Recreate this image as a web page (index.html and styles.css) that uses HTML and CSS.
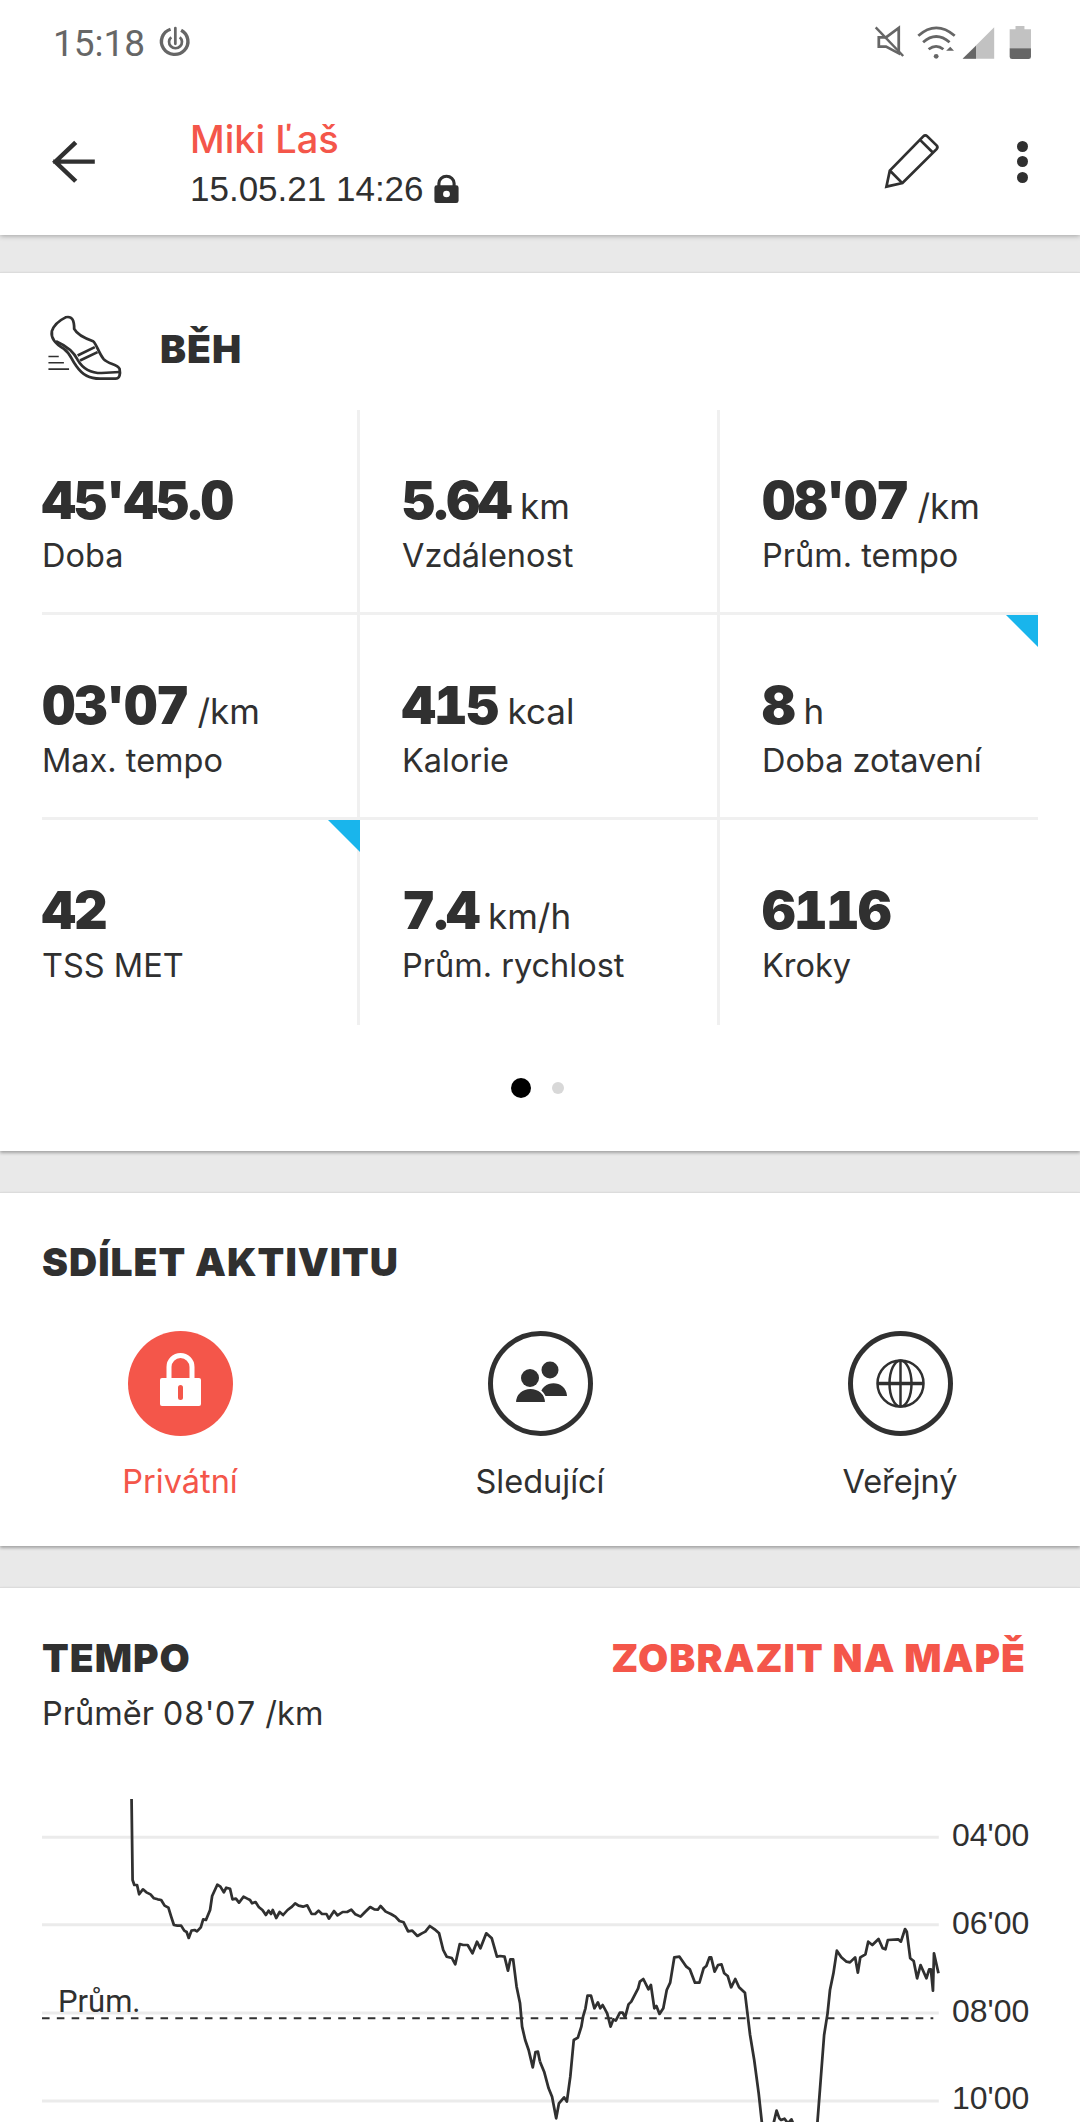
FILE: index.html
```html
<!DOCTYPE html>
<html lang="en">
<head>
    <meta charset="UTF-8">
    <meta name="viewport" content="width=device-width, initial-scale=1.0">
    <title>Miki Ľaš - Běh</title>
    <link rel="stylesheet" href="styles.css">
</head>
<body>
    <div class="top">
        <div class="status">
            <span class="time">15:18</span>
            <svg class="target" viewBox="460 78 100 100" preserveAspectRatio="none">
                <path d="M497 88 A39 39 0 1 0 528 91" fill="none" stroke="#666" stroke-width="10"/>
                <path d="M499 112 A19 19 0 1 0 524 112" fill="none" stroke="#666" stroke-width="8"/>
                <path d="M511 84 V132" stroke="#666" stroke-width="8" stroke-linecap="round"/>
            </svg>
            <svg class="status-icons" viewBox="970 75 460 105" preserveAspectRatio="none">
                <path d="M984 112 L1005 112 L1042 84 V160 L1005 140 L984 140 Z" fill="none" stroke="#666" stroke-width="8"/>
                <path d="M975 82 L1055 168" stroke="#666" stroke-width="7"/>
                <path d="M1099 107 Q1151 60 1205 107" fill="none" stroke="#666" stroke-width="8"/>
                <path d="M1113 127 Q1151 92 1190 127" fill="none" stroke="#666" stroke-width="8"/>
                <path d="M1129 148 Q1151 130 1172 148" fill="none" stroke="#666" stroke-width="8"/>
                <circle cx="1151" cy="169" r="7" fill="#666"/>
                <path d="M1180 152 L1192 140 L1203 152 Z" fill="#666"/>
                <path d="M1228 176 L1320 82 V176 Z" fill="#c2c2c2"/>
                <path d="M1228 176 L1267 137 V176 Z" fill="#666"/>
                <path d="M1382 78 H1408 V88 H1427 V145 H1365 V88 H1382 Z" fill="#c2c2c2"/>
                <path d="M1365 145 H1427 V170 Q1427 177 1420 177 H1372 Q1365 177 1365 170 Z" fill="#666"/>
            </svg>
        </div>
        <div class="header">
            <svg class="back" viewBox="140 410 150 150" preserveAspectRatio="none">
                <path d="M155 484 H275 M220 426 L161 484 L220 543" fill="none" stroke="#303030" stroke-width="13"/>
            </svg>
            <div class="header-text">
                <div class="name">Miki Ľaš</div>
                <div class="date">15.05.21 14:26
                    <svg class="mini-lock" viewBox="1250 515 84 96" preserveAspectRatio="none">
                        <path d="M1270 555 V546 A22 21 0 0 1 1314 546 V555" fill="none" stroke="#303030" stroke-width="9"/>
                        <rect x="1257" y="552" width="70" height="53" rx="7" fill="#303030"/>
                        <circle cx="1292" cy="578" r="10" fill="#fff"/>
                    </svg>
                </div>
            </div>
            <svg class="pencil" viewBox="995 395 170 170" preserveAspectRatio="none">
                <path d="M1005 558 L1015 510 L1113 408 Q1119 402 1125 408 L1152 435 Q1157 440 1152 446 L1052 547 Z M1015 510 L1050 546 M1105 420 L1141 456" fill="none" stroke="#303030" stroke-width="8"/>
            </svg>
            <div class="more"><i></i><i></i><i></i></div>
        </div>
    </div>

    <div class="card summary">
        <div class="sport">
            <svg class="shoe" viewBox="130 940 230 205" preserveAspectRatio="none">
                <g fill="none" stroke="#303030" stroke-width="8">
                    <path d="M190 950 C170 960 155 975 150 992 C146 1015 160 1030 185 1045 C205 1060 205 1075 220 1095 C240 1125 260 1135 290 1135 L335 1135 C348 1135 350 1120 347 1105 C340 1090 315 1092 300 1075 C285 1055 280 1030 270 1022 C250 1015 225 1005 215 985 C215 960 210 945 190 950 Z"/>
                    <path d="M162 1022 C190 1035 212 1050 225 1078 C240 1105 265 1118 295 1118 L347 1115"/>
                    <path d="M225 1065 L275 1040 M232 1080 L283 1055"/>
                    <path d="M140 1068 H170 M140 1087 H185 M140 1106 H200" stroke-width="5"/>
                </g>
            </svg>
            <span class="sport-name">BĚH</span>
        </div>
        <div class="metrics">
            <div class="metric"><div class="value">45'45.0</div><div class="label">Doba</div></div>
            <div class="metric"><div class="value">5.64 <span>km</span></div><div class="label">Vzdálenost</div></div>
            <div class="metric"><div class="value">08'07 <span>/km</span></div><div class="label">Prům. tempo</div></div>
            <div class="metric"><div class="value">03'07 <span>/km</span></div><div class="label">Max. tempo</div></div>
            <div class="metric"><div class="value">415 <span>kcal</span></div><div class="label">Kalorie</div></div>
            <div class="metric flag"><div class="value">8 <span>h</span></div><div class="label">Doba zotavení</div></div>
            <div class="metric flag"><div class="value">42</div><div class="label">TSS MET</div></div>
            <div class="metric"><div class="value">7.4 <span>km/h</span></div><div class="label">Prům. rychlost</div></div>
            <div class="metric"><div class="value">6116</div><div class="label">Kroky</div></div>
        </div>
        <div class="dots"><i class="on"></i><i></i></div>
    </div>

    <div class="card share">
        <h2>SDÍLET AKTIVITU</h2>
        <div class="share-options">
            <div class="option active">
                <svg class="option-icon" viewBox="0 0 105 105">
                    <circle cx="52.5" cy="52.5" r="52.5" fill="#f4564a"/>
                    <path d="M41 48 V36 A11.500 11.500 0 0 1 64 36 V48" fill="none" stroke="#fff" stroke-width="5"/>
                    <rect x="32" y="47" width="41" height="28" rx="2" fill="#fff"/>
                    <rect x="50" y="54" width="5" height="15" rx="2.500" fill="#f4564a"/>
                </svg>
                <span>Privátní</span>
            </div>
            <div class="option">
                <svg class="option-icon" viewBox="0 0 105 105">
                    <circle cx="52.5" cy="52.5" r="50" fill="none" stroke="#303030" stroke-width="5"/>
                    <ellipse cx="62" cy="39" rx="8.500" ry="8.500" fill="#303030"/>
                    <path d="M52 65 C53 48 78 48 79 65 Z" fill="#303030"/>
                    <ellipse cx="42" cy="47" rx="9" ry="9" fill="#303030"/>
                    <path d="M27 72 C27 52 58 52 58 72 Z" fill="#303030" stroke="#fff" stroke-width="2"/>
                </svg>
                <span>Sledující</span>
            </div>
            <div class="option">
                <svg class="option-icon" viewBox="0 0 105 105">
                    <circle cx="52.5" cy="52.5" r="50" fill="none" stroke="#303030" stroke-width="5"/>
                    <g fill="none" stroke="#303030" stroke-width="2.500">
                        <circle cx="52.5" cy="52.5" r="23"/>
                        <ellipse cx="52.5" cy="52.5" rx="11" ry="23"/>
                        <path d="M52.500 29.500 V75.500"/>
                        <path d="M29.500 52.500 H75.500" stroke-width="3.500"/>
                    </g>
                </svg>
                <span>Veřejný</span>
            </div>
        </div>
    </div>

    <div class="card tempo">
        <div class="tempo-head">
            <h2>TEMPO</h2>
            <a class="map-link">ZOBRAZIT NA MAPĚ</a>
        </div>
        <div class="average">Průměr 08'07 /km</div>
        <svg class="chart" viewBox="0 0 1080 362">
            <g transform="scale(0.34439 0.33333)">
                <g stroke="#ebebeb" stroke-width="9">
                    <path d="M122 232 H2726"/>
                    <path d="M122 494 H2726"/>
                    <path d="M122 759 H2726"/>
                    <path d="M122 1023 H2726"/>
                </g>
                <path d="M122 775 H2710" stroke="#303030" stroke-width="6" stroke-dasharray="22 21"/>
                <g fill="none" stroke="#303030" stroke-width="8" stroke-linejoin="round">
                    <polyline points="382,117 385,360 390,375 398,375 404,403 415,388 425,397 437,403 447,415 458,418 468,420 478,437 489,443 497,470 505,495 515,497 526,497 535,512 542,516 548,534 556,512 565,510 572,514 583,502 590,478 598,480 610,450 616,408 631,374 640,380 650,397 657,383 668,386 675,418 685,416 694,428 707,410 718,416 726,420 732,430 742,426 752,442 762,450 772,465 780,452 787,462 792,450 802,474 812,456 822,465 835,450 848,440 857,430 867,437 880,440 892,436 905,462 915,462 925,452 935,462 948,462 955,476 970,453 980,466 995,456 1008,456 1020,449 1032,463 1047,470 1060,456 1075,441 1087,448 1097,449 1105,438 1120,455 1135,462 1148,470 1160,483 1172,487 1185,514 1197,512 1212,528 1225,520 1235,515 1248,498 1262,508 1275,520 1287,570 1297,590 1312,594 1322,613 1335,552 1345,555 1358,555 1372,580 1385,545 1395,565 1412,520 1428,535 1443,590 1452,588 1465,590 1475,632 1482,598 1490,598 1500,680 1510,730 1516,800 1525,840 1535,870 1547,922 1555,876 1562,875 1568,905"/>
                    <g transform="translate(1568 0)">
                        <polyline points="0,905 12,935 25,985 35,1010 47,1075 55,1030 70,1012 78,1025 88,950 98,840 110,833 120,800 125,770 132,745 138,707 148,707 158,745 168,727 175,745 182,735 195,760 205,800 213,778 220,782 232,758 240,758 247,772 257,733 265,725 285,685 290,665 300,657 315,688 322,675 332,745 338,738 347,762 358,745 368,690 378,668 390,592 405,590 425,620 435,628 450,668 463,668 475,625 483,618 492,592 497,592 507,635 517,615 527,613 535,640 545,648 555,682 567,657 578,682 595,698 610,825 622,900 635,1000 645,1095"/>
                        <polyline points="677,1095 687,1052 695,1075 700,1080 710,1076 720,1090 730,1078 737,1095"/>
                        <polyline points="805,1095 815,960 825,825 835,760 842,690 852,640 862,572 875,592 890,605 900,607 915,592 923,638 930,592 945,583 953,545 965,555 983,537 995,565 1003,568 1010,540 1040,538 1048,545 1060,507 1065,515 1075,595 1085,603 1095,655 1105,615 1122,655 1130,628 1135,628 1141,692 1144,580 1157,640"/>
                    </g>
                </g>
            </g>
            <text x="58" y="252" class="avg-label">Prům.</text>
            <text x="952" y="86" class="axis-label">04'00</text>
            <text x="952" y="174" class="axis-label">06'00</text>
            <text x="952" y="262" class="axis-label">08'00</text>
            <text x="952" y="349" class="axis-label">10'00</text>
        </svg>
    </div>
</body>
</html>
```

FILE: styles.css
```css
html, body {
    margin: 0;
    padding: 0;
}

body {
    width: 1080px;
    height: 2122px;
    overflow: hidden;
    background-color: #e9e9e9;
    color: #303030;
    font-family: Inter, "Noto Sans", sans-serif;
}

.top {
    background-color: #fff;
    height: 235px;
    box-shadow: 0 1px 5px rgba(0, 0, 0, 0.3);
    position: relative;
}

.status {
    height: 94px;
    display: flex;
    align-items: flex-start;
    padding: 23px 48px 0 53px;
    box-sizing: border-box;
}

.time {
    font-family: Roboto, sans-serif;
    font-size: 37px;
    line-height: 41px;
    color: #666;
}

.target {
    width: 34px;
    height: 33px;
    margin: 3px 0 0 13px;
}

.status-icons {
    width: 158px;
    height: 35px;
    margin: 2px 0 0 auto;
}

.header {
    display: flex;
    align-items: center;
    height: 141px;
    padding-left: 48px;
}

.back {
    width: 52px;
    height: 50px;
    margin-top: -6px;
}

.header-text {
    margin-left: 90px;
    margin-top: -5px;
}

.name {
    font-size: 38px;
    line-height: 46px;
    font-weight: 500;
    color: #f4564a;
}

.date {
    font-family: "Liberation Sans", Arial, sans-serif;
    font-size: 35px;
    line-height: 40px;
    margin-top: 7px;
    display: flex;
    align-items: center;
    gap: 8px;
}

.mini-lock {
    width: 29px;
    height: 32px;
}

.pencil {
    width: 58px;
    height: 57px;
    margin-left: auto;
    margin-top: -9px;
}

.more {
    display: flex;
    flex-direction: column;
    gap: 4.500px;
    margin: -6px 52px 0 76px;
}

.more i {
    display: block;
    width: 11px;
    height: 11px;
    border-radius: 50%;
    background-color: #303030;
}

.card {
    background-color: #fff;
    border-top: 1px solid #dcdcdc;
    box-shadow: 0 2px 3px rgba(0, 0, 0, 0.3);
}

.summary {
    margin-top: 37px;
    height: 879px;
    box-sizing: border-box;
}

.sport {
    display: flex;
    align-items: center;
    height: 124px;
    padding: 13px 0 0 45px;
}

.shoe {
    width: 79px;
    height: 68px;
}

.sport-name {
    margin-left: 36px;
    font-size: 39px;
    font-weight: 900;
    letter-spacing: 1px;
}

.metrics {
    display: grid;
    grid-template-columns: 318px 360px 318px;
    margin-left: 42px;
    width: 996px;
}

.metric {
    position: relative;
    height: 202px;
    padding-left: 42px;
    border-right: 3px solid #f0f0f0;
    border-bottom: 3px solid #f0f0f0;
}

.metric:nth-child(3n+1) {
    padding-left: 0;
}

.metric:nth-child(3n) {
    border-right: none;
}

.metric:nth-last-child(-n+3) {
    border-bottom: none;
    height: 205px;
}

.flag::after {
    content: "";
    position: absolute;
    top: 0;
    right: -3px;
    border-top: 32px solid #19b5ec;
    border-left: 32px solid transparent;
}

.metric:nth-child(3n).flag::after {
    right: 0;
}

.value {
    margin-top: 61px;
    font-size: 52px;
    line-height: 60px;
    font-weight: 900;
    letter-spacing: -1.500px;
    font-variant-numeric: tabular-nums;
    white-space: nowrap;
}

.value span {
    font-size: 35px;
    line-height: 1;
    font-weight: 400;
    letter-spacing: 0;
    margin-left: -3px;
}

.label {
    font-size: 32.500px;
    line-height: 40px;
    margin-top: 5px;
}

.dots {
    display: flex;
    align-items: center;
    justify-content: center;
    gap: 21px;
    margin-top: 53px;
    padding-right: 5px;
}

.dots i {
    display: block;
    width: 12px;
    height: 12px;
    border-radius: 50%;
    background-color: #d8d8d8;
}

.dots i.on {
    width: 20px;
    height: 20px;
    background-color: #000;
}

h2 {
    margin: 0;
    font-size: 39px;
    line-height: 46px;
    font-weight: 900;
    letter-spacing: 1px;
}

.share {
    margin-top: 41px;
    height: 354px;
    padding-top: 46px;
    box-sizing: border-box;
}

.share h2 {
    margin-left: 42px;
}

.share-options {
    display: grid;
    grid-template-columns: repeat(3, 360px);
    margin-top: 46px;
}

.option {
    display: flex;
    flex-direction: column;
    align-items: center;
    gap: 26px;
    font-size: 32.500px;
    line-height: 40px;
}

.option-icon {
    width: 105px;
    height: 105px;
}

.active {
    color: #f4564a;
}

.tempo {
    margin-top: 41px;
    height: 535px;
    padding-top: 47px;
    box-sizing: border-box;
}

.tempo-head {
    display: flex;
    justify-content: space-between;
    padding: 0 54px 0 42px;
}

.map-link {
    font-size: 39px;
    line-height: 46px;
    font-weight: 900;
    letter-spacing: 1px;
    color: #f4564a;
}

.average {
    margin: 13px 0 0 42px;
    font-size: 32.500px;
    line-height: 40px;
    font-variant-numeric: tabular-nums;
}

.chart {
    display: block;
    width: 1080px;
    height: 362px;
    margin-top: 26px;
}

.axis-label {
    font-family: "Liberation Sans", Arial, sans-serif;
    font-size: 32px;
    fill: #303030;
}

.avg-label {
    font-family: Roboto, sans-serif;
    font-size: 31px;
    fill: #303030;
}
```
